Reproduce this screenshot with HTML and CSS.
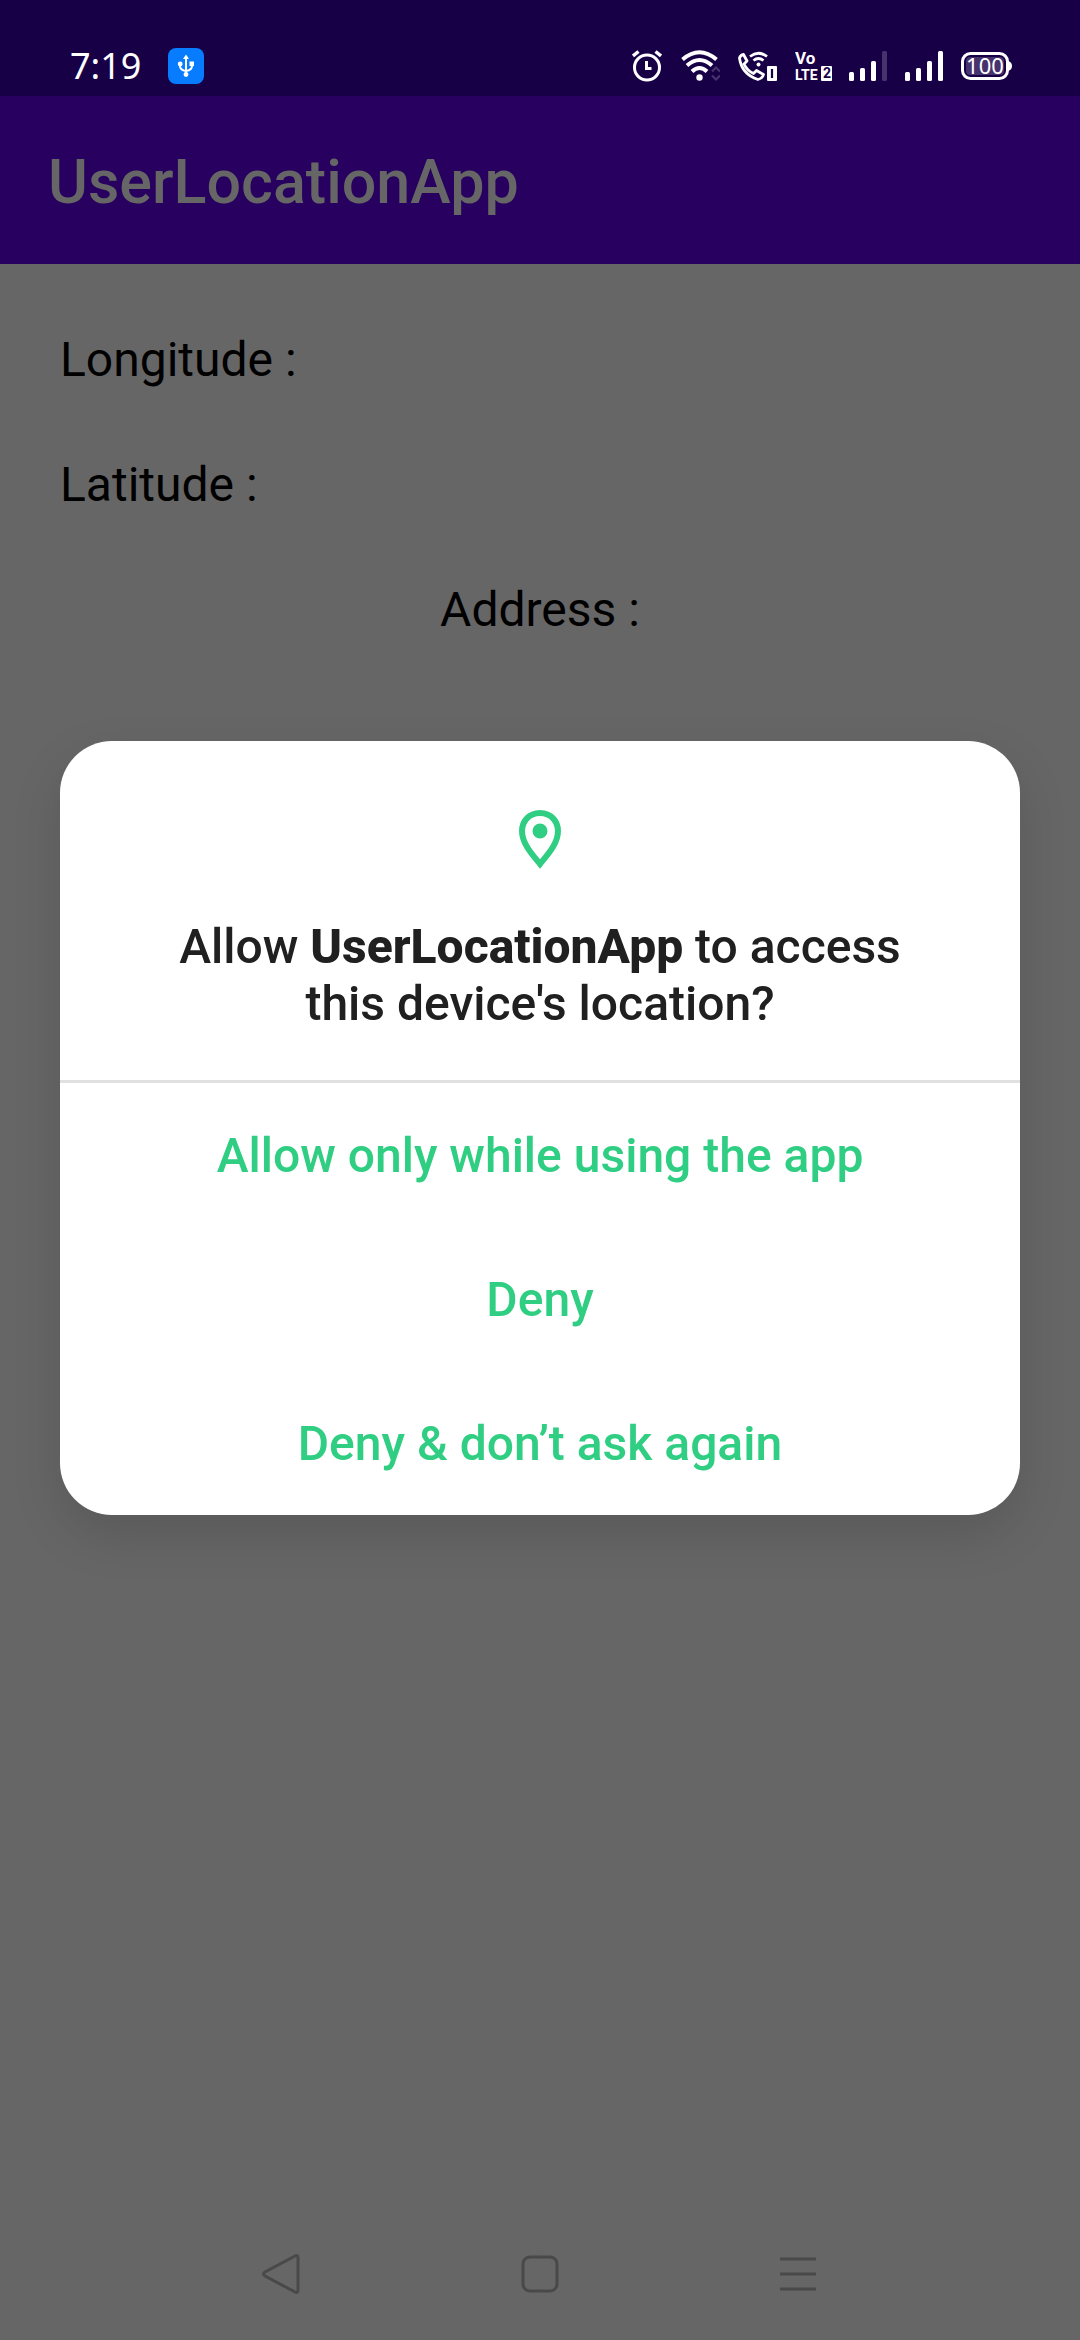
FILE: index.html
```html
<!DOCTYPE html>
<html lang="en">
<head>
<meta charset="utf-8">
<meta name="viewport" content="width=device-width, initial-scale=1">
<title>UserLocationApp</title>
<link rel="stylesheet" href="styles.css">
</head>
<body>
<div class="screen">
  <div class="status-bar">
    <div class="status-left">
      <time class="clock">7:19</time>
      <svg class="usb" width="36" height="36" viewBox="0 0 36 36" aria-label="USB connected">
        <rect width="36" height="36" rx="8" fill="#087cff"/>
        <g fill="none" stroke="#fff" stroke-width="2">
          <path d="M18 9v18M12 16v2q0 4 6 5q6-1 6-5v-2"/>
        </g>
        <path fill="#fff" d="M18 6.500l3 4.500h-6z"/>
        <circle cx="12.200" cy="16" r="2.400" fill="#fff"/>
        <rect x="21.500" y="13.500" width="4.500" height="4.500" fill="#fff"/>
        <circle cx="18" cy="26.500" r="2.400" fill="#fff"/>
      </svg>
    </div>
    <div class="status-right">
      <svg width="30" height="32" viewBox="0 0 30 32" fill="none" stroke="#fff" aria-label="Alarm set">
        <circle cx="15" cy="17.500" r="12.500" stroke-width="3"/>
        <path d="M14.500 11v7.500h5" stroke-width="3"/>
        <path d="M1 6l5.500-4.500M29 6l-5.500-4.500" stroke-width="3.400"/>
      </svg>
      <svg class="wifi" width="39" height="32" viewBox="0 0 39 32" fill="none" stroke="#fff" stroke-width="4" aria-label="Wi-Fi">
        <path d="M1.500 9.500Q18.500-5 35.500 9.500M6 15.500Q18.500 4.500 31 15.500M11 21.500Q18.500 14.500 26 21.500"/>
        <circle cx="18.500" cy="27.500" r="3.200" fill="#fff" stroke="none"/>
        <path d="M31 21.500l4-4 4 4M31 25.500l4 4 4-4" stroke="#46326c" stroke-width="2.200"/>
      </svg>
      <svg class="call" width="41" height="32" viewBox="0 0 41 32" fill="none" stroke="#fff" aria-label="Wi-Fi calling">
        <path d="M2.500 8q1-3 4-3.500l3.500 6.500-3 3q3 6.500 9.500 9.500l3-3 7 4q-1 4-5.500 5Q4.500 24 2.500 8z" stroke-width="2.800" stroke-linejoin="round"/>
        <path d="M13 6.500q8.500-6.500 17 0M16.500 10.500q5-4 10 0" stroke-width="2.800"/>
        <circle cx="21.500" cy="14.500" r="2" fill="#fff" stroke="none"/>
        <rect x="30" y="16" width="10" height="15" rx="1" fill="#fff" stroke="none"/>
        <path d="M35 19v9" stroke="#180047" stroke-width="2.200"/>
      </svg>
      <svg class="volte" width="37" height="32" viewBox="0 0 37 32" aria-label="VoLTE 2">
        <text class="vo" x="0" y="14" fill="#fff">Vo</text>
        <text class="lte" x="0" y="30" fill="#fff">LTE</text>
        <rect x="26" y="16" width="11" height="15" rx="1" fill="#fff"/>
        <text class="sim" x="28" y="28" fill="#180047">2</text>
      </svg>
      <svg class="signal" width="39" height="32" viewBox="0 0 39 32" fill="#fff" aria-label="SIM 1 signal">
        <rect x="0" y="22" width="5" height="9" rx="1.500"/>
        <rect x="11" y="18" width="5" height="13" rx="1.500"/>
        <rect x="22" y="11" width="5" height="20" rx="1.500"/>
        <rect x="33" y="1" width="5" height="30" rx="1.500" fill="#46326c"/>
      </svg>
      <svg class="signal" width="39" height="32" viewBox="0 0 39 32" fill="#fff" aria-label="SIM 2 signal">
        <rect x="0" y="22" width="5" height="9" rx="1.500"/>
        <rect x="11" y="18" width="5" height="13" rx="1.500"/>
        <rect x="22" y="11" width="5" height="20" rx="1.500"/>
        <rect x="33" y="1" width="5" height="30" rx="1.500"/>
      </svg>
      <svg class="battery" width="51" height="32" viewBox="0 0 51 32" aria-label="Battery">
        <rect x="1.500" y="3.500" width="45" height="25" rx="8" fill="#180047" stroke="#fff" stroke-width="3"/>
        <rect x="5" y="7" width="38" height="18" rx="4" fill="#46326c"/>
        <path d="M47 11q4 1 4 5t-4 5z" fill="#fff"/>
        <text x="24" y="24" text-anchor="middle" fill="#fff">100</text>
      </svg>
    </div>
  </div>

  <header class="app-bar"><h1 class="app-title">UserLocationApp</h1></header>

  <main class="content">
    <p class="field">Longitude :</p>
    <p class="field">Latitude :</p>
    <p class="field field-center">Address :</p>
  </main>

  <nav class="nav-bar" aria-label="System">
    <button class="nav-button" type="button" aria-label="Back">
      <svg width="42" height="42" viewBox="0 0 42 42"><path d="M34 3q3-1.500 3 2v32q0 3.500-3 2L4 23q-3-2 0-4z"/></svg>
    </button>
    <button class="nav-button" type="button" aria-label="Home">
      <svg width="42" height="42" viewBox="0 0 42 42"><rect x="4" y="4" width="34" height="34" rx="7"/></svg>
    </button>
    <button class="nav-button" type="button" aria-label="Recent apps">
      <svg width="42" height="42" viewBox="0 0 42 42"><path d="M3 6h36M3 21h36M3 36h36"/></svg>
    </button>
  </nav>
</div>

<div class="overlay">
  <section class="dialog" role="dialog" aria-modal="true" aria-labelledby="question">
    <div class="dialog-head">
      <svg class="pin" width="72" height="72" viewBox="0 0 72 72" aria-hidden="true">
        <path d="M36 9C24.500 9 18 18 18 27c0 12 9 22 18 33C45 49 54 39 54 27 54 18 47.500 9 36 9z" fill="none" stroke="#2fce82" stroke-width="6"/>
        <circle cx="36" cy="27" r="7.500" fill="#2fce82"/>
      </svg>
      <h2 class="question" id="question">Allow <strong>UserLocationApp</strong> to access this device's location?</h2>
    </div>
    <div class="actions">
      <button class="action" type="button">Allow only while using the app</button>
      <button class="action" type="button">Deny</button>
      <button class="action" type="button">Deny &amp; don’t ask again</button>
    </div>
  </section>
</div>
</body>
</html>
```

FILE: styles.css
```css
* {
  box-sizing: border-box;
}

body {
  margin: 0;
  font-family: Roboto, "Noto Sans", sans-serif;
  background: #666;
}

svg {
  display: block;
  flex: none;
}

.screen {
  display: flex;
  flex-direction: column;
  min-height: 100vh;
}

/* Status bar */
.status-bar {
  display: flex;
  justify-content: space-between;
  align-items: flex-end;
  height: 96px;
  padding: 0 68px 12px 70px;
  background: #180047;
  color: #fff;
}

.status-left,
.status-right {
  display: flex;
  align-items: center;
  height: 36px;
}

.status-left {
  gap: 27px;
}

.status-right {
  gap: 17px;
}

.clock {
  font-family: "Noto Sans", sans-serif;
  font-size: 36px;
  line-height: 34px;
}

.wifi {
  margin-left: 2px;
}

.volte text {
  font: bold 14px Roboto, sans-serif;
}

.volte .vo {
  font-size: 17px;
}

.battery text {
  font: 22px "Noto Sans", sans-serif;
}

/* App bar */
.app-bar {
  display: flex;
  align-items: center;
  height: 168px;
  padding: 4px 48px 0;
  background: #28005f;
}

.app-title {
  margin: 0;
  color: #666;
  font-size: 61px;
  font-weight: 500;
  line-height: 72px;
}

/* Location fields */
.content {
  display: flex;
  flex: 1;
  flex-direction: column;
  gap: 61px;
  padding: 64px 60px;
}

.field {
  margin: 0;
  color: #000;
  font-size: 48px;
  line-height: 64px;
}

.field-center {
  text-align: center;
}

/* System navigation */
.nav-bar {
  display: grid;
  grid-template-columns: repeat(3, 258px);
  justify-content: center;
  height: 132px;
}

.nav-button {
  display: grid;
  place-items: center;
  padding: 0;
  border: 0;
  background: none;
}

.nav-button svg {
  fill: none;
  stroke: #494949;
  stroke-width: 3px;
}

/* Permission dialog */
.overlay {
  position: fixed;
  inset: 0;
  display: flex;
  align-items: center;
  padding: 0 60px 84px;
}

.dialog {
  flex: 1;
  overflow: hidden;
  border-radius: 52px;
  background: #fff;
  box-shadow: 0 20px 50px rgba(0, 0, 0, 0.13);
}

.dialog-head {
  display: flex;
  flex-direction: column;
  align-items: center;
  gap: 42px;
  padding: 63px 96px 48px;
  border-bottom: 3px solid #e0e0e0;
}

.question {
  margin: 0;
  color: #202020;
  font-size: 48px;
  font-weight: 500;
  line-height: 57px;
  text-align: center;
}

.question strong {
  font-weight: 800;
}

.actions {
  display: flex;
  flex-direction: column;
}

.action {
  height: 144px;
  padding: 2px 0 0;
  border: 0;
  background: none;
  color: #2fce82;
  font: 500 48px/56px Roboto, sans-serif;
}
```
